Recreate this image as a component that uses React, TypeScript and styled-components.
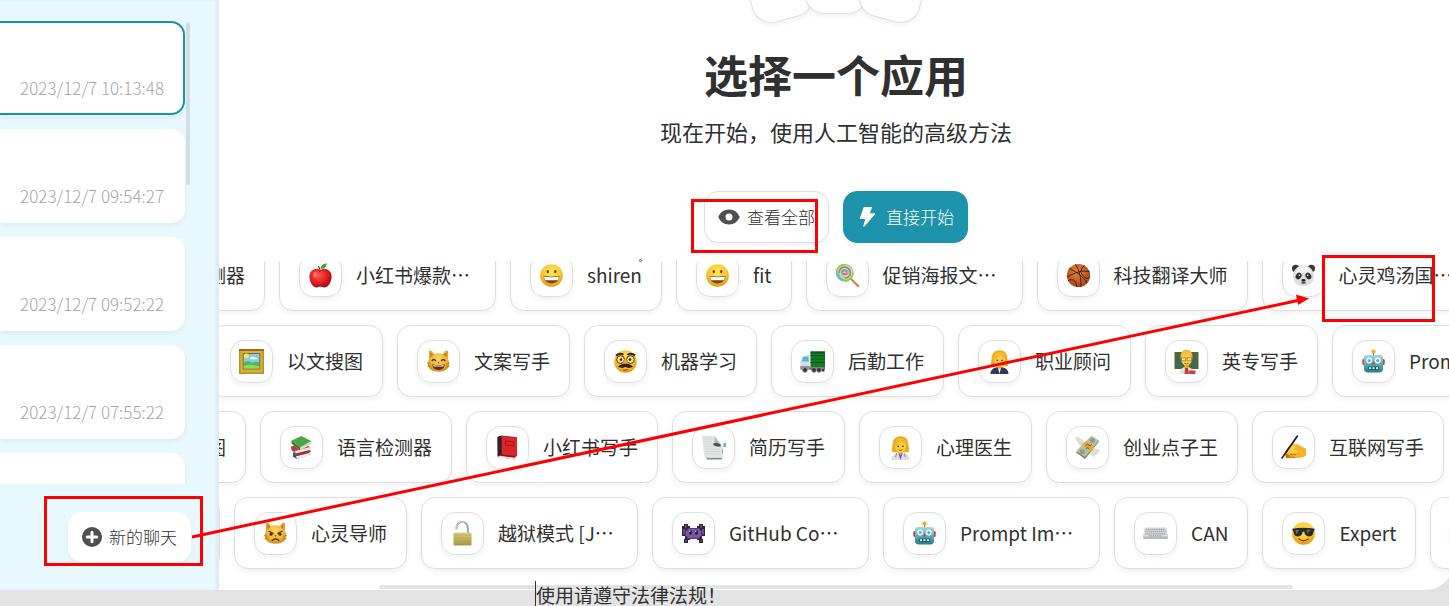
import React from "react";
import styled, { createGlobalStyle, css } from "styled-components";

const GlobalStyle = createGlobalStyle`
  * { box-sizing: border-box; }
  html, body, #root { height: 100%; }
  body {
    margin: 0;
    overflow: hidden;
    background: #e3e3e3;
    color: #303030;
    font-family: "Noto Sans CJK SC", "Noto Sans", sans-serif;
  }
  button { font-family: inherit; color: inherit; cursor: pointer; }
`;

/* ---------- emoji drawings (25 x 25 grid) ---------- */

const EmojiSvg = styled.svg`
  display: block;
  width: 25px;
  height: 25px;
`;

const HiddenSvg = styled.svg`
  position: absolute;
`;

const Gradients = () => (
  <HiddenSvg width="0" height="0" aria-hidden="true">
    <defs>
      <radialGradient id="face" cx="50%" cy="35%" r="65%">
        <stop offset="0" stopColor="#ffe95c" />
        <stop offset="0.6" stopColor="#fdc92f" />
        <stop offset="1" stopColor="#e8930c" />
      </radialGradient>
      <radialGradient id="fur" cx="50%" cy="40%" r="65%">
        <stop offset="0" stopColor="#fbd75a" />
        <stop offset="0.6" stopColor="#eeb737" />
        <stop offset="1" stopColor="#c98215" />
      </radialGradient>
      <radialGradient id="red" cx="40%" cy="35%" r="70%">
        <stop offset="0" stopColor="#ff5a4d" />
        <stop offset="0.6" stopColor="#dd1c1f" />
        <stop offset="1" stopColor="#9b0c12" />
      </radialGradient>
      <radialGradient id="ball" cx="45%" cy="35%" r="70%">
        <stop offset="0" stopColor="#e8863c" />
        <stop offset="1" stopColor="#9c3f10" />
      </radialGradient>
      <linearGradient id="teal" x1="0" y1="0" x2="0" y2="1">
        <stop offset="0" stopColor="#9fdbe2" />
        <stop offset="1" stopColor="#1f7f8c" />
      </linearGradient>
      <linearGradient id="brass" x1="0" y1="0" x2="0" y2="1">
        <stop offset="0" stopColor="#d9cf7c" />
        <stop offset="1" stopColor="#a59443" />
      </linearGradient>
    </defs>
  </HiddenSvg>
);

const CatHead = () => (
  <>
    <path d="M3.500 1.600c2 .2 3.600 1.600 4.800 3.300a13 13 0 0 1 8.400 0C17.900 3.200 19.500 1.800 21.500 1.600c.9 2.600 1 5.700.4 8.400 1 1.700 1.400 3.200 1.400 4.700 0 5-4.800 8-10.800 8S1.700 19.700 1.700 14.700c0-1.500.4-3 1.400-4.700-.6-2.700-.5-5.800.4-8.400z" fill="url(#fur)" />
    <path d="M4.500 3.600c1.200.4 2.100 1.500 2.800 2.500L4.500 8.800zM20.500 3.600c-1.200.4-2.100 1.500-2.800 2.500l2.800 2.700z" fill="#c9772a" />
  </>
);

const RobotArt = () => (
  <>
    <circle cx="12.500" cy="2.500" r="2.100" fill="#f7a51c" />
    <path d="M12 4h1v3h-1z" fill="#bf6a28" />
    <rect x="1.300" y="10" width="3" height="6" rx="1.200" fill="#cf4436" />
    <rect x="20.700" y="10" width="3" height="6" rx="1.200" fill="#cf4436" />
    <path d="M6 6h13a3 3 0 0 1 3 3v10.500a4 4 0 0 1-4 4H7a4 4 0 0 1-4-4V9a3 3 0 0 1 3-3z" fill="url(#teal)" />
    <circle cx="8.200" cy="11.500" r="2.900" fill="#fff" />
    <circle cx="16.800" cy="11.500" r="2.900" fill="#fff" />
    <circle cx="8.200" cy="11.500" r="1.600" fill="#39b6dd" />
    <circle cx="16.800" cy="11.500" r="1.600" fill="#39b6dd" />
    <path d="M12.500 12.600l1.600 3h-3.200z" fill="#c8382e" />
    <rect x="7" y="17.500" width="11" height="3.600" rx="1" fill="#2a5560" />
    <path d="M8 18.300h2v1.800H8zm3.500 0h2v1.800h-2zm3.500 0h2v1.800h-2z" fill="#e9f4f5" />
  </>
);

const GrinArt = () => (
  <>
    <circle cx="12.500" cy="12.500" r="11.300" fill="url(#face)" />
    <ellipse cx="8.800" cy="8.600" rx="1.200" ry="1.700" fill="#6b3f12" />
    <ellipse cx="16.200" cy="8.600" rx="1.200" ry="1.700" fill="#6b3f12" />
    <path d="M4.700 12.800c4.800 1.100 10.800 1.100 15.600 0 .2 5-3.200 7.600-7.800 7.600s-8-2.600-7.800-7.600z" fill="#7a4317" />
    <path d="M5.200 13.400c4.600 1 10 1 14.600 0 0 1.900-.4 3.100-1 3.900H6.200c-.6-.8-1-2-1-3.900z" fill="#fff" />
  </>
);

const BlondeHead = () => (
  <>
    <path d="M12.500 1.300c-5.600 0-7.700 4-7.900 8.200-.2 3.300-1.200 5.600-.2 7.700h16.200c1-2.100 0-4.400-.2-7.700-.2-4.200-2.300-8.200-7.900-8.200z" fill="#eba91d" />
    <path d="M10.300 15.500h4.400v5h-4.400z" fill="#e9a51c" />
    <ellipse cx="12.500" cy="11.300" rx="5.400" ry="6.400" fill="#ffd040" />
    <path d="M6.700 10.700c3.200-.5 5.400-2 6.700-4.800 1 2.100 2.700 3.500 4.900 4.200.2-5-2.300-7-5.800-7s-6.100 2.600-5.800 7.600z" fill="#f3bb2d" />
    <circle cx="10.200" cy="11.300" r=".9" fill="#5a3510" />
    <circle cx="14.900" cy="11.300" r=".9" fill="#5a3510" />
    <path d="M10.500 14.700q2 1.500 4 0" stroke="#b2502a" fill="none" />
  </>
);

const art: Record<string, React.ReactNode> = {
  apple: (
    <>
      <path d="M12.500 7.200c2-1.300 4.600-1.800 6.800-.8 3.400 1.500 4.800 5 4.200 8.800-.7 4.500-3.300 8.800-6.500 9.200-1.700.2-2.800-.7-4.500-.7s-2.800.9-4.500.7c-3.200-.4-5.800-4.700-6.500-9.200-.6-3.800.8-7.300 4.200-8.800 2.200-1 4.800-.5 6.800.8z" fill="url(#red)" />
      <path d="M12.200 8.600c0-2.500-.8-4.300-2-5.500" stroke="#62351c" strokeWidth="1.200" fill="none" />
      <path d="M12.600 5.700c.1-3.300 2.700-5.200 6.100-5.300.1 3.300-2.600 5.500-6.100 5.300z" fill="#4d9e2a" />
      <ellipse cx="7" cy="11.500" rx="1.800" ry="2.800" fill="#ff9c90" opacity=".6" />
    </>
  ),
  grin: <GrinArt />,
  lollipop: (
    <>
      <path d="M15.500 15.500l7.700 7.600" stroke="#c98a55" strokeWidth="2.200" strokeLinecap="round" />
      <circle cx="9.700" cy="9.700" r="8.900" fill="#55bfe6" />
      <path d="M9.700 9.700m-7.300 0a7.300 7.300 0 0 1 14.600 0 6 6 0 0 1-12 .3 4.700 4.700 0 0 1 9.400-.3 3.500 3.500 0 0 1-7 0" fill="none" stroke="#f2e23d" strokeWidth="1.600" />
      <path d="M1.500 9.700a8.200 8.200 0 0 1 8.200-8.200M18 9.700a8.200 8.200 0 0 1-8.300 8.300" fill="none" stroke="#86ca45" strokeWidth="1.500" />
      <path d="M9.700 15.200a5.500 5.500 0 0 0 5.500-5.500 5.500 5.500 0 0 0-11 0" fill="none" stroke="#9a6ac9" strokeWidth="1.300" />
      <circle cx="9.700" cy="9.700" r="2.500" fill="#ec5fa8" />
      <path d="M8.500 9.800a1.400 1.400 0 0 1 2.600 0" stroke="#fff" fill="none" />
    </>
  ),
  basketball: (
    <>
      <circle cx="12.500" cy="12.500" r="11.600" fill="url(#ball)" />
      <path d="M1 14c8.500-4.500 15.500-7.600 23-5M9.500 1.300c4 6.500 6 14 5.300 22.500M3.300 5.500C9 8 17.500 13.500 21 20M18.500 2.500c-3.800 3.300-4.700 6.300-1.800 9.800s4.700 3.600 7 2M2 17.800c4.500-2.400 8-1.300 8.800 6" fill="none" stroke="#442010" strokeWidth="1" />
    </>
  ),
  panda: (
    <>
      <circle cx="4.700" cy="5.500" r="3.700" fill="#393939" />
      <circle cx="20.300" cy="5.500" r="3.700" fill="#393939" />
      <path d="M12.500 2.500c6 0 9.500 4 10.300 9 1 6-2.700 11.500-10.300 11.500S1.200 17.500 2.200 11.500c.8-5 4.300-9 10.300-9z" fill="#dedede" />
      <path d="M12.500 3.300c4 0 7 2.500 7.500 6.500H5c.5-4 3.500-6.500 7.500-6.500z" fill="#fff" opacity=".6" />
      <ellipse cx="7.600" cy="13" rx="2.700" ry="3.500" transform="rotate(35 7.600 13)" fill="#333" />
      <ellipse cx="17.400" cy="13" rx="2.700" ry="3.500" transform="rotate(-35 17.400 13)" fill="#333" />
      <circle cx="8.300" cy="12.300" r=".8" fill="#fff" />
      <circle cx="16.700" cy="12.300" r=".8" fill="#fff" />
      <ellipse cx="12.500" cy="17.300" rx="2.200" ry="1.400" fill="#222" />
      <path d="M9.500 20q3 1.600 6 0l-3-1.500z" fill="#444" />
    </>
  ),
  picture: (
    <>
      <path d="M0 0h25v25H0z" fill="#c08f22" />
      <path d="M1.500 1.500h22v22h-22z" fill="#ddae3c" />
      <path d="M0 0h25v2H0z" fill="#a26b12" />
      <path d="M3.700 4h17.600v16.500H3.700z" fill="#8a6514" />
      <path d="M4.700 5h15.600v14.500H4.700z" fill="#79d0ee" />
      <circle cx="7.300" cy="7" r="2.500" fill="#fbe251" />
      <path d="M12 8.500c1.500-1.600 3-1.200 3.500 0 2-.4 3 .4 3 1.700H11c0-.9.300-1.500 1-1.700z" fill="#fff" />
      <path d="M4.700 13.500c3.300-2 6-1.700 8.500.5 2.300-1.500 4.800-1.600 7.100-.6v6.100H4.700z" fill="#55b749" />
      <path d="M4.700 17c5-2 9-1.500 15.600.5v2H4.700z" fill="#8fd764" />
    </>
  ),
  catGrin: (
    <>
      <CatHead />
      <path d="M5.800 12q2-3 4 0M15.200 12q2-3 4 0" fill="none" stroke="#513010" strokeWidth="1.500" />
      <path d="M11.300 13h2.400l-1.200 1.500z" fill="#9a4a25" />
      <path d="M6.300 15.300q6.200 2 12.400 0c0 3.500-2.500 5.700-6.200 5.700s-6.200-2.200-6.200-5.700z" fill="#5b3013" />
      <path d="M7 16q5.500 1.500 11 0l-.8 1.600H7.800z" fill="#fff" />
      <path d="M1 14l4 .7M1.300 17.500l4-.7M24 14l-4 .7M23.700 17.500l-4-.7" stroke="#a96b17" strokeWidth=".6" />
    </>
  ),
  disguise: (
    <>
      <circle cx="12.500" cy="12.500" r="11.300" fill="url(#face)" />
      <path d="M3 6.600q4-3.200 7.500-.8M14.500 5.800q4-2.400 7.500.8" stroke="#42240d" strokeWidth="2" fill="none" />
      <circle cx="7.600" cy="10.600" r="3.900" fill="#ffdf80" stroke="#3a3128" strokeWidth="1" />
      <circle cx="17.400" cy="10.600" r="3.900" fill="#ffdf80" stroke="#3a3128" strokeWidth="1" />
      <circle cx="8" cy="10.600" r="1.300" fill="#3c2410" />
      <circle cx="17" cy="10.600" r="1.300" fill="#3c2410" />
      <path d="M12.500 9c1 1.600 2.600 4 2.300 5.500-.2 1.200-4.400 1.200-4.600 0C9.900 13 11.500 10.600 12.500 9z" fill="#f1a424" />
      <path d="M12.500 15c1.600-.8 5 .1 7.500 2.500-2.500 1.900-6 1.800-7.500.3-1.500 1.500-5 1.600-7.500-.3 2.500-2.400 5.900-3.300 7.500-2.500z" fill="#33200f" />
      <path d="M10 20.500q2.500 1.200 5 0" stroke="#8e501a" strokeWidth="1.200" fill="none" />
    </>
  ),
  truck: (
    <>
      <path d="M10.500 2.500H25v16H10.500z" fill="#177a25" />
      <path d="M10.500 2.500H25v2H10.500zM10.500 6.300H25v.9H10.500zM10.500 9.700H25v.9H10.500zM10.500 13.100H25v.9H10.500z" fill="#0d5619" />
      <path d="M2.700 6.800 9.500 6v14H.3v-7z" fill="#d5dde0" />
      <path d="M3.300 8 8.500 7.500v5H1.800z" fill="#56b4d8" />
      <path d="M.3 17h10.200v3.800H.3z" fill="#8d979b" />
      <path d="M10 18.500h15v2H10z" fill="#4b4f51" />
      <g fill="#333" stroke="#9a9a9a" strokeWidth=".9">
        <circle cx="5" cy="21" r="2.400" />
        <circle cx="14" cy="21" r="2.400" />
        <circle cx="19" cy="21" r="2.400" />
        <circle cx="23" cy="21" r="1.700" />
      </g>
    </>
  ),
  officer: (
    <>
      <BlondeHead />
      <path d="M3.500 25c0-4.300 3-6.300 6.500-6.800l2.500 2 2.500-2c3.500.5 6.500 2.500 6.500 6.800z" fill="#2b3a56" />
      <path d="M11 18.800l1.500 6.200 1.500-6.200-1.500 1z" fill="#f5f5f5" />
    </>
  ),
  teacher: (
    <>
      <path d="M.5 3h24v17H.5z" fill="#76572f" />
      <path d="M1.700 4.200h21.600v14.600H1.700z" fill="#3d6b52" />
      <path d="M12.500 1C8 1 6.300 4 6.500 8l1 5h10l1-5c.2-4-1.500-7-6-7z" fill="#e9a723" />
      <path d="M10.300 14h4.400v5h-4.400z" fill="#e2a01f" />
      <ellipse cx="12.500" cy="10.300" rx="5.200" ry="6.300" fill="#ffd040" />
      <path d="M7 7.500C9 7 13 6 14.500 4.500 15.500 6 17 7 18 7.500 18 4 16 2 12.500 2S7 4 7 7.500z" fill="#f5c235" />
      <path d="M7.500 8.800h4.300v3H7.500zm5.700 0h4.300v3h-4.300z" fill="#ffe59a" stroke="#8a4d1c" strokeWidth=".6" />
      <path d="M10.500 14.200q2 1.400 4 0" stroke="#a44d22" fill="none" />
      <path d="M5.500 25c0-4 2-6.300 4.500-6.800l2.500 1 2.500-1c2.500.5 4.500 2.800 4.500 6.800z" fill="#e3e3e6" />
      <path d="M11 19h3l.6 6h-4z" fill="#c73936" />
      <path d="M14.500 21.500h7V25h-7z" fill="#d73a3f" />
    </>
  ),
  robot: <RobotArt />,
  books: (
    <>
      <path d="M4 17.500l15-2.200 3 4.200-14 4.500-4-2.300z" fill="#3056a5" />
      <path d="M7 21.300l14.500-3.600v2.500L8 24z" fill="#f1eee4" />
      <path d="M2 11.500l14-3 5.500 4-14 5.500-5-2.500z" fill="#c4343b" />
      <path d="M6 16l15-4v3.300L7 19.500z" fill="#efe9dc" />
      <path d="M6.500 18.600l14.500-3.500 1 1.500-14 4.400z" fill="#b72632" />
      <path d="M2.500 5.500 12.500 1l10 5.300-11.500 6z" fill="#4fa44a" />
      <path d="M2.500 5.500l8.500 6.800 11.500-6v3L11 15.500 3 9z" fill="#d5dcc8" />
      <path d="M2.500 5.500 11 12.300v3.200L2.500 8.600z" fill="#2c7c31" />
    </>
  ),
  redBook: (
    <>
      <path d="M2.500 2 6 .5l16 1.800V22l-2 2.500L3 22z" fill="#8f1218" />
      <path d="M3.500 20.500l16 2.300L22 20.500v2L20 24.700 3.500 22.500z" fill="#eee6dc" />
      <path d="M6.500 1l15.500 1.500V21L6.500 19.500z" fill="#d9252b" />
      <path d="M2.500 2l4-1.200v19l-4 1.700z" fill="#33202a" />
      <path d="M10.500 6l8 .8v4l-8-.8z" fill="none" stroke="#a11219" strokeWidth=".8" />
    </>
  ),
  pages: (
    <>
      <path d="M5 22.500h16v2H6z" fill="#8b8b8b" />
      <path d="M12 3l9.500 8v12H7z" fill="#c9cbcd" />
      <path d="M22.500 8H25v4h-2.500zM20.500 14.500H22v4h-1.500z" fill="#67a9e6" />
      <path d="M.7.700h12.600l7.700 10v11.800H3.500z" fill="#e3e4e5" />
      <path d="M3 4h9M3 6.500h8M3.500 9h8M3.500 11.500h15M4 14h15M4 16.500h15M4.500 19h14" stroke="#cbcdd0" strokeWidth=".6" />
      <path d="M13.300.700 21 10.800c-3 1.300-6 .6-9-1.500 2-2 2-5 1.300-8.600z" fill="#b9babc" />
      <path d="M13 8.300c2-.8 4.600-.3 6.500 1.300v1.800c-3 .5-5.500-.2-7.500-2z" fill="#4e5052" />
    </>
  ),
  doctor: (
    <>
      <BlondeHead />
      <path d="M3.500 25c0-4.300 3-6.300 6.500-6.800l2.500 1 2.500-1c3.500.5 6.500 2.500 6.500 6.800z" fill="#dcdfe4" />
      <path d="M10.500 18.600l2 6.400 2-6.400-2 1.200z" fill="#8d45b8" />
      <path d="M8.500 18.500l-.8 3.500M16.500 18.500l.8 3.500" stroke="#6d7480" strokeWidth=".9" />
    </>
  ),
  moneyWings: (
    <>
      <path d="M11 9C8.500 4.500 4 2.300.5 1.500.2 4 1 5.500 2.300 6.300c-.6 1 .4 2.200 1.700 2.400-.2 1.300 1 2 2.300 2z" fill="#dcdbcd" />
      <path d="M14 16c2.500-2.700 6.500-3 10.800-1.500-.3 2-1 3-2.200 3.300.1 1.300-.9 2.200-2.200 2.200-.2 1.300-1.400 1.900-2.900 1.700z" fill="#dcdbcd" />
      <path d="M1 17.500 16.500 1l7.500 5.500-14 17.500z" fill="#7e8071" />
      <path d="M1 16 16.500.7 24 5.500 10 22z" fill="#b9bbab" />
      <circle cx="17.500" cy="5.500" r="2.500" fill="#989a89" />
      <circle cx="7.300" cy="16.800" r="2.500" fill="#989a89" />
      <path d="M7 10l4-4 8.500 6-4 5z" fill="#d9ad42" />
      <path d="M10.500 10.800q2-2.600 3.300-.8t3-.6M11 13.500q1.500-1.500 3 0" stroke="#7d5b12" strokeWidth="1" fill="none" />
    </>
  ),
  writing: (
    <>
      <path d="M6 14c3-4.300 6.500-5.800 10-5l5.500 3 3.500 1.800v7c-4 2-8.500 2.700-13 1.900L7 23.500C4.500 22 4 18 6 14z" fill="#f6b229" />
      <path d="M6.500 14.500c3.500-4.300 7-5.300 9.500-4.200l-3.500 4.500 5 1.300-2.500 2-7.500.4z" fill="#ffcf4a" />
      <path d="M9 19.500l6 .3M8 22l6 .6" stroke="#bd7810" strokeWidth="1.100" />
      <path d="M4 19c1.700-1 4.500.3 4.500 2s-1.500 2.500-3.500 2z" fill="#c9701b" />
      <path d="M16.300 1.200 5.500 16.500" stroke="#20242a" strokeWidth="1.900" strokeLinecap="round" />
      <path d="M5.500 16.500 1 23" stroke="#20242a" strokeWidth="1.500" strokeLinecap="round" />
    </>
  ),
  catAngry: (
    <>
      <CatHead />
      <path d="M5.500 10l5 2.700M19.500 10l-5 2.700" stroke="#5a350f" strokeWidth="1.400" />
      <circle cx="8" cy="13.300" r="1.500" fill="#4b2c10" />
      <circle cx="17" cy="13.300" r="1.500" fill="#4b2c10" />
      <path d="M11.300 14.300h2.400l-1.200 1.500z" fill="#9a4a25" />
      <path d="M8.800 19.700q3.700-3.400 7.400 0" stroke="#5b3013" strokeWidth="1.400" fill="none" />
      <path d="M1 14.500l4 .7M1.300 18l4-.7M24 14.500l-4 .7M23.700 18l-4-.7" stroke="#a96b17" strokeWidth=".6" />
    </>
  ),
  unlock: (
    <>
      <path d="M6.500 8.500V6.700a5.700 5.700 0 0 1 11.400 0V12" fill="none" stroke="#9fb0ba" strokeWidth="2.200" />
      <path d="M6 8.500V6.500a6 6 0 0 1 8-5.200" fill="none" stroke="#d2dee4" strokeWidth="1" />
      <rect x="3.500" y="11.500" width="18" height="13" rx="1.200" fill="url(#brass)" />
      <path d="M3.500 14h18M3.500 17h18M3.500 20h18" stroke="#b7a853" strokeWidth=".7" />
    </>
  ),
  monster: (
    <>
      <path d="M3 3h4v2h2v2h7V5h2V3h4v2h2v10h-3v3h1v4h-4v-3h-2v-1H9v1H7v3H3v-4h1v-3H1V5h2z" fill="#32243f" />
      <path d="M6.500 7.500h12v2h2v6h-2v2h-12v-2h-2v-6h2z" fill="#7656a5" />
      <path d="M4 4.300h1.500v2.200H4zm15.500 0H21v2.200h-1.500zM2.300 8h1.500v5.500H2.300zm19 0h1.500v5.500h-1.500zM4.300 19.300h1.500v1.500H4.300zm15 0h1.500v1.500h-1.500z" fill="#7656a5" />
      <path d="M8.300 9.500h2.400v4H8.300zm6 0h2.400v4h-2.400z" fill="#221631" />
      <path d="M8.300 9.500h1v1.500h-1zm6 0h1v1.500h-1z" fill="#d8ccea" />
    </>
  ),
  keyboard: (
    <>
      <path d="M2 6.800h21l2 9.700c.1 1-.3 1.500-1 1.500H1c-.7 0-1.100-.5-1-1.500z" fill="#b9babd" />
      <path d="M2 6.800h21l1.700 8.800H.3z" fill="#dddee0" />
      <path d="M2.800 8.500h19.400M2.300 10.700h20.400M1.900 12.900h21.200M6 14.900h13" stroke="#a3a5aa" strokeWidth="1.300" strokeDasharray="1.400 .5" />
    </>
  ),
  sunglasses: (
    <>
      <circle cx="12.500" cy="12.500" r="11.300" fill="url(#face)" />
      <path d="M1.300 7.700q11.200-2 22.400 0l-.4 2c-.7.300-.8 1-1.100 2.300-.5 2.500-1.900 3.500-4.500 3.500-2.800 0-4-2-4.400-4.700h-1.600c-.4 2.700-1.600 4.700-4.400 4.700-2.600 0-4-1-4.500-3.500-.3-1.300-.4-2-1.100-2.300z" fill="#2b2a2d" />
      <path d="M4.300 9.300l4.500-.7-3.500 4.500zM15.500 8.700h4.500l-4 4z" fill="#77757a" opacity=".8" />
      <path d="M7.800 18q4.700 3.300 9.400 0" stroke="#74420f" strokeWidth="1.500" fill="none" strokeLinecap="round" />
    </>
  ),
};

const Emoji = ({ name }: { name: string }) => (
  <EmojiSvg viewBox="0 0 25 25" aria-hidden="true">
    {art[name]}
  </EmojiSvg>
);

/* ---------- page frame ---------- */

const Page = styled.div`
  position: relative;
  display: flex;
  flex-direction: column;
  height: 100vh;
  overflow: hidden;
`;

const Window = styled.div`
  display: flex;
  flex: 1;
  min-height: 0;
  margin-right: -4px;
  border-radius: 0 0 27px 0;
  background: #fff;
  overflow: hidden;
`;

const Sidebar = styled.aside`
  display: flex;
  flex-direction: column;
  flex: 0 0 219px;
  background: #e7f8ff;
  box-shadow: inset -3px 0 3px rgba(0, 0, 0, 0.05);
`;

const ChatScroller = styled.div`
  display: flex;
  align-items: flex-start;
  gap: 1px;
  flex: 1;
  min-height: 0;
  padding-top: 21px;
  overflow: hidden;
`;

const ChatList = styled.ul`
  display: flex;
  flex-direction: column;
  gap: 14px;
  width: 185px;
  margin: 0;
  padding: 0;
  list-style: none;
`;

const ChatItem = styled.li<{ $selected?: boolean }>`
  display: flex;
  align-items: flex-end;
  justify-content: flex-end;
  height: 94px;
  padding: 0 19px 13px;
  border: 2px solid ${(p) => (p.$selected ? "#1d93ab" : "transparent")};
  border-left: 0;
  border-radius: 0 14px 14px 0;
  background: #fff;
  box-shadow: 0 3px 5px rgba(0, 0, 0, 0.05);
  color: #a6a6a6;
  font-size: 17px;
  font-weight: 300;
  line-height: 24px;
  white-space: nowrap;
`;

const ChatThumb = styled.div`
  width: 4px;
  height: 163px;
  margin-top: 1px;
  border-radius: 2px;
  background: #d0dfe6;
`;

const SidebarTail = styled.div`
  display: flex;
  justify-content: flex-end;
  padding: 28px;
`;

const shadow = css`
  box-shadow: 0 3px 5px rgba(0, 0, 0, 0.05);
`;

const IconButton = styled.button<{ $kind: "plain" | "outlined" | "primary" }>`
  display: inline-flex;
  align-items: center;
  gap: 7px;
  height: ${(p) => (p.$kind === "plain" ? "50px" : "52px")};
  padding: 0 ${(p) => (p.$kind === "plain" ? "14px" : "13px")};
  border: ${(p) => (p.$kind === "plain" ? "0" : "1px solid")};
  border-color: ${(p) => (p.$kind === "primary" ? "#1d93ab" : "#dedede")};
  border-radius: 14px;
  background: ${(p) => (p.$kind === "primary" ? "#1d93ab" : "#fff")};
  color: ${(p) => (p.$kind === "primary" ? "#fff" : "#303030")};
  font-size: 17px;
  font-weight: 300;
  line-height: 24px;
  white-space: nowrap;
  ${shadow}

  svg {
    display: block;
    width: ${(p) => (p.$kind === "plain" ? "20px" : "22px")};
    height: ${(p) => (p.$kind === "plain" ? "20px" : "22px")};
  }
`;

const Main = styled.main`
  display: flex;
  flex-direction: column;
  flex: 1;
  min-width: 0;
`;

const Hero = styled.header`
  display: flex;
  flex-direction: column;
  align-items: center;
  padding-bottom: 18px;
  overflow: hidden;
`;

const CardFan = styled.div`
  display: flex;
  margin-top: -74px;
`;

const FanCard = styled.div<{ $tilt?: number }>`
  position: relative;
  width: 62px;
  height: 88px;
  border: 1px solid #dedede;
  border-radius: 19px;
  background: #fff;
  ${shadow}
  ${(p) => p.$tilt && `transform: rotate(${p.$tilt}deg) translateY(7px);`}
`;

const Title = styled.h1`
  margin: 30px 0 0;
  font-size: 44px;
  line-height: 60px;
  font-weight: 700;
`;

const Subtitle = styled.p`
  margin: 12px 0 0;
  font-size: 22px;
  line-height: 30px;
`;

const Actions = styled.div`
  display: flex;
  gap: 14px;
  margin-top: 45px;
`;

const MaskArea = styled.section`
  flex: 1;
  min-height: 0;
  overflow: hidden;
`;

const MaskRows = styled.div`
  display: flex;
  flex-direction: column;
  gap: 14px;
  margin-top: -22px;
`;

const MaskRow = styled.div<{ $shift: number }>`
  display: flex;
  gap: 14px;
  margin-left: -${(p) => p.$shift}px;
`;

const MaskCard = styled.button`
  display: flex;
  align-items: center;
  flex: none;
  gap: 14px;
  height: 72px;
  padding: 0 19px;
  border: 1px solid #dedede;
  border-radius: 14px;
  background: #fff;
  ${shadow}
`;

const MaskIcon = styled.span`
  display: flex;
  align-items: center;
  justify-content: center;
  width: 43px;
  height: 43px;
  border: 1px solid #dedede;
  border-radius: 14px;
  ${shadow}
`;

const MaskName = styled.span<{ $long?: boolean }>`
  width: ${(p) => (p.$long ? "120px" : "auto")};
  font-size: 19px;
  line-height: 28px;
  text-align: left;
  white-space: nowrap;
`;

const MainThumb = styled.div`
  width: 74%;
  height: 4px;
  margin: 0 0 1px 13%;
  border-radius: 2px;
  background: #e3e3e3;
`;

const Notice = styled.footer`
  height: 16px;
`;

const NoticeText = styled.p`
  position: absolute;
  left: 535px;
  bottom: -3px;
  margin: 0;
  border-left: 1px solid #303030;
  font-size: 19px;
  line-height: 28px;
`;

const Markup = styled.svg`
  position: absolute;
  top: 0;
  left: 0;
  pointer-events: none;
`;

/* ---------- data ---------- */

type Mask = { icon: string; name: string; long?: boolean };

const rows: { shift: number; masks: Mask[] }[] = [
  {
    shift: 146,
    masks: [
      { icon: "books", name: "语言检测器" },
      { icon: "apple", name: "小红书爆款…", long: true },
      { icon: "grin", name: "shiren" },
      { icon: "grin", name: "fit" },
      { icon: "lollipop", name: "促销海报文…", long: true },
      { icon: "basketball", name: "科技翻译大师" },
      { icon: "panda", name: "心灵鸡汤国…", long: true },
    ],
  },
  {
    shift: 9,
    masks: [
      { icon: "picture", name: "以文搜图" },
      { icon: "catGrin", name: "文案写手" },
      { icon: "disguise", name: "机器学习" },
      { icon: "truck", name: "后勤工作" },
      { icon: "officer", name: "职业顾问" },
      { icon: "teacher", name: "英专写手" },
      { icon: "robot", name: "Prompt Im…", long: true },
    ],
  },
  {
    shift: 146,
    masks: [
      { icon: "picture", name: "以文搜图" },
      { icon: "books", name: "语言检测器" },
      { icon: "redBook", name: "小红书写手" },
      { icon: "pages", name: "简历写手" },
      { icon: "doctor", name: "心理医生" },
      { icon: "moneyWings", name: "创业点子王" },
      { icon: "writing", name: "互联网写手" },
    ],
  },
  {
    shift: 172,
    masks: [
      { icon: "officer", name: "职业顾问" },
      { icon: "catAngry", name: "心灵导师" },
      { icon: "unlock", name: "越狱模式 [J…", long: true },
      { icon: "monster", name: "GitHub Co…", long: true },
      { icon: "robot", name: "Prompt Im…", long: true },
      { icon: "keyboard", name: "CAN" },
      { icon: "sunglasses", name: "Expert" },
      { icon: "grin", name: "fit" },
    ],
  },
];

const chats = [
  "2023/12/7 10:13:48",
  "2023/12/7 09:54:27",
  "2023/12/7 09:52:22",
  "2023/12/7 07:55:22",
  "",
];

export default function App() {
  return (
    <Page lang="zh-CN">
      <GlobalStyle />
      <Gradients />
      <Window>
        <Sidebar>
          <ChatScroller>
            <ChatList>
              {chats.map((time, i) => (
                <ChatItem key={i} $selected={i === 0}>
                  {time}
                </ChatItem>
              ))}
            </ChatList>
            <ChatThumb />
          </ChatScroller>
          <SidebarTail>
            <IconButton $kind="plain">
              <svg viewBox="0 0 20 20" aria-hidden="true">
                <circle cx="10" cy="10" r="10" fill="#4f4f4f" />
                <path d="M10 5.200v9.600M5.200 10h9.600" stroke="#fff" strokeWidth="3" strokeLinecap="round" />
              </svg>
              新的聊天
            </IconButton>
          </SidebarTail>
        </Sidebar>
        <Main>
          <Hero>
            <CardFan>
              <FanCard $tilt={-15} />
              <FanCard />
              <FanCard $tilt={15} />
            </CardFan>
            <Title>选择一个应用</Title>
            <Subtitle>现在开始，使用人工智能的高级方法</Subtitle>
            <Actions>
              <IconButton $kind="outlined">
                <svg viewBox="0 0 22 22" aria-hidden="true">
                  <path
                    d="M11 3.500c5.200 0 9 3 10.700 7.500C20 15.500 16.200 18.500 11 18.500S2 15.500.3 11C2 6.500 5.800 3.500 11 3.500zm0 4a3.500 3.500 0 1 0 0 7 3.500 3.500 0 0 0 0-7z"
                    fill="#4f4f4f"
                  />
                </svg>
                查看全部
              </IconButton>
              <IconButton $kind="primary">
                <svg viewBox="0 0 22 22" aria-hidden="true">
                  <path
                    d="M7.600 1h6.800c.5 0 .7.400.5.800L12.800 7.200h4.500c.7 0 1 .6.500 1.200L7.300 20.600c-.5.500-1.200.2-1-.5L8.300 13H3.600c-.6 0-.9-.5-.7-1.100L6.500 1.800C6.700 1.200 7 1 7.600 1z"
                    fill="#fff"
                  />
                </svg>
                直接开始
              </IconButton>
            </Actions>
          </Hero>
          <MaskArea>
            <MaskRows>
              {rows.map((row, r) => (
                <MaskRow key={r} $shift={row.shift}>
                  {row.masks.map((m, i) => (
                    <MaskCard key={i}>
                      <MaskIcon>
                        <Emoji name={m.icon} />
                      </MaskIcon>
                      <MaskName $long={m.long}>{m.name}</MaskName>
                    </MaskCard>
                  ))}
                </MaskRow>
              ))}
            </MaskRows>
          </MaskArea>
          <MainThumb />
        </Main>
      </Window>
      <Notice>
        <NoticeText>使用请遵守法律法规！</NoticeText>
      </Notice>
      <Markup width="1449" height="606" viewBox="0 0 1449 606" aria-hidden="true">
        <g fill="none" stroke="#f00" strokeWidth="3">
          <rect x="45.500" y="497.500" width="156" height="67" />
          <rect x="692.500" y="200.500" width="124" height="51" />
          <rect x="1323.500" y="256.500" width="110" height="64" />
          <path d="M192 537 1300 300" />
        </g>
        <path d="M1309 298.500 1296 294.500 1298 305z" fill="#f00" />
        <circle cx="640.500" cy="260.500" r="1" fill="none" stroke="#303030" strokeWidth=".8" />
      </Markup>
    </Page>
  );
}
